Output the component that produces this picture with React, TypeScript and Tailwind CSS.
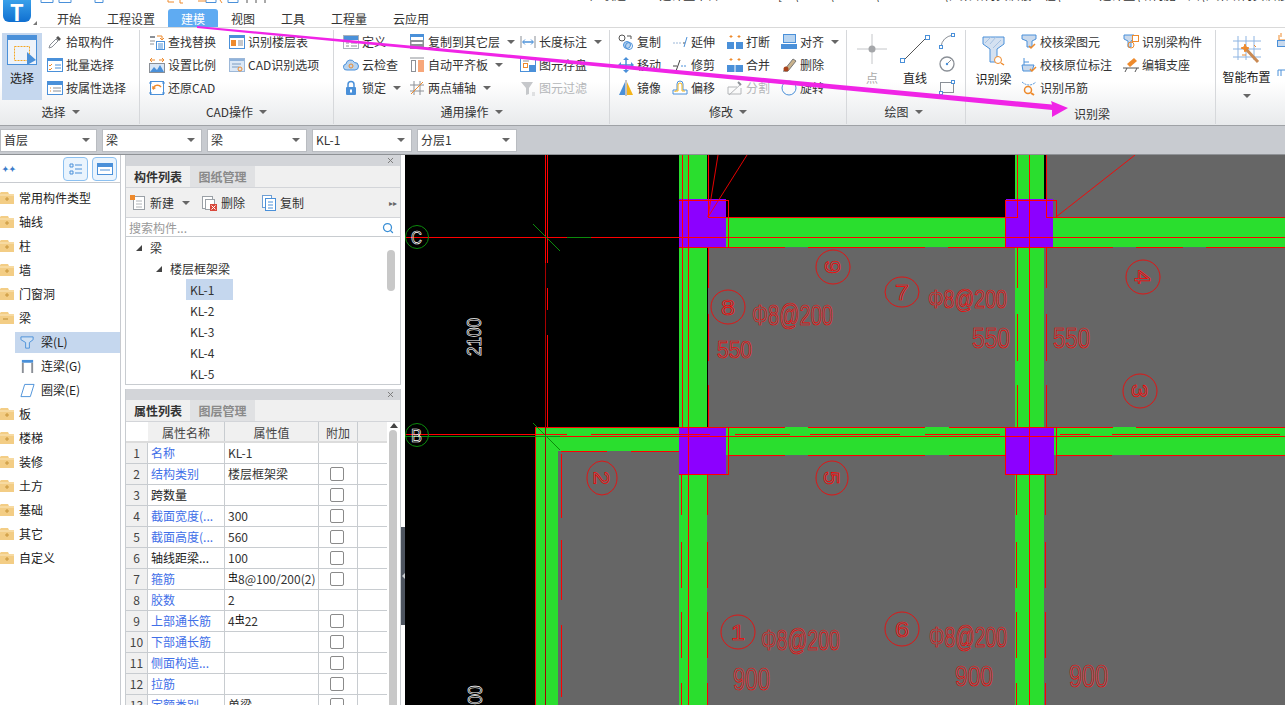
import React from "react";
import { Search, X } from "lucide-react";

const B = "#4a90d9";
const O = "#ee8a2c";
const G = "#8a8f96";

// 16x16 ribbon icon wrapper
function Ic({ children, s = 16 }: { children: React.ReactNode; s?: number }) {
  return (
    <svg width={s} height={s} viewBox="0 0 16 16" fill="none" className="shrink-0">
      {children}
    </svg>
  );
}

const icons: Record<string, React.ReactNode> = {
  pick: (<><path d="M2 14l1-3 6-6 2 2-6 6z" fill="#fff" stroke={G} /><path d="M9 4l2-2 3 3-2 2z" fill="#555" /></>),
  batch: (<><rect x="0.5" y="1.5" width="15" height="13" fill="#fff" stroke={B} /><rect x="1" y="2" width="14" height="2" fill={B} /><path d="M2 8l1 1 2-2M2 12l1 1 2-2" stroke={O} /><path d="M8 8h6M8 11h6" stroke={B} /></>),
  attr: (<><rect x="0.5" y="1.5" width="15" height="13" fill="#fff" stroke={B} /><rect x="1" y="2" width="14" height="3" fill={B} /><path d="M3 8h1M3 11h1" stroke={O} /><path d="M6 8h8M6 11h8" stroke={G} /></>),
  find: (<><path d="M1 2h5v2H1z" fill={G} /><path d="M8 2h5v3" stroke={O} /><path d="M11 4l2 2 2-2" stroke={O} /><rect x="7.5" y="7.5" width="8" height="8" fill="#fff" stroke={B} /><path d="M9 10h5M9 12h5M9 14h5" stroke={B} /><path d="M1 7h5M1 10h4" stroke={G} /></>),
  scale: (<><path d="M1 3h5M10 3h5" stroke={O} /><path d="M3 1l-2 2 2 2M13 1l2 2-2 2" stroke={O} /><rect x="0.5" y="6.5" width="15" height="9" fill="#d8e6f6" stroke={G} /><path d="M1 15l4-5 3 3 3-5 4 7z" fill={B} /></>),
  restore: (<><rect x="1.5" y="1.5" width="13" height="13" fill="#fff" stroke={B} /><path d="M0 3h3M13 3h3M0 13h3M13 13h3" stroke={B} /><path d="M4 9a4.500 4.500 0 0 1 8-2" stroke={O} strokeWidth="1.500" /><path d="M3 6l1 4 3-2z" fill={O} /></>),
  floor: (<><rect x="0.5" y="1.500" width="15" height="13" fill="#fff" stroke={B} /><rect x="1" y="2" width="14" height="2" fill={B} /><rect x="2" y="6" width="5" height="6" fill={O} /><path d="M9 7h5M9 9h5M9 11h5" stroke={G} /></>),
  cadopt: (<><rect x="0.5" y="1.500" width="15" height="13" fill="#dce8f6" stroke="#9db8d8" /><rect x="1" y="2" width="14" height="2" fill="#8fb3dc" /><path d="M3 7h9M3 10h7" stroke="#7d9cc0" /><circle cx="11" cy="12" r="2" stroke={O} /></>),
  define: (<><rect x="0.5" y="1.500" width="15" height="13" fill="#fff" stroke="#aab2bc" /><rect x="1" y="2" width="14" height="4" fill={B} /><path d="M3 9h3M8 9h6M3 12h3M8 12h6" stroke={G} /></>),
  cloud: (<><path d="M4 13a3 3 0 0 1-1-6 4.500 4.500 0 0 1 8.500-1.500A3.700 3.700 0 0 1 12 13z" fill="#b8d4f0" stroke={B} /><circle cx="8" cy="9" r="2" stroke={O} /></>),
  lock: (<><path d="M5 7V4.500a3 3 0 0 1 6 0V7" stroke={B} strokeWidth="1.500" /><rect x="3" y="7" width="10" height="8" rx="1" fill={B} /><rect x="7" y="9.500" width="2" height="3" fill="#fff" /></>),
  copyfloor: (<><rect x="1.500" y="0.500" width="13" height="7" fill="#fff" stroke={B} /><rect x="2" y="1" width="12" height="2" fill={B} /><rect x="1" y="6" width="14" height="9" fill="#8c9096" /><rect x="2.500" y="8" width="11" height="2" fill="#fff" /></>),
  align: (<><path d="M1 1h14" stroke="#8c9096" /><rect x="2.500" y="3.500" width="4" height="11" fill="#fff" stroke="#8c9096" /><rect x="9" y="3" width="6" height="12" fill="#f7a77a" /></>),
  twoaxis: (<><path d="M1 5h14M1 11h14M5 1v14M11 1v14" stroke="#8c9096" /><path d="M2 14L14 2" stroke={O} /></>),
  measure: (<><path d="M1 2v12M15 2v12" stroke={G} /><path d="M3 8h10" stroke={B} strokeWidth="1.500" /><path d="M5 5.500L2.500 8 5 10.500M11 5.500L13.500 8 11 10.500" stroke={B} /></>),
  save: (<><rect x="0.500" y="1.500" width="15" height="13" fill="#fff" stroke={B} /><path d="M3 4h6" stroke={G} /><rect x="3.500" y="6.500" width="4" height="4" stroke={O} /><rect x="9" y="8" width="6" height="6" fill={B} /></>),
  filter: (<><path d="M1 2h12L9 8v6l-3 1V8z" fill="#c6c8cb" /><path d="M12 13h3M12 15h3" stroke="#c6c8cb" /></>),
  copy: (<><circle cx="4" cy="4" r="3" stroke="#555" /><circle cx="9" cy="11" r="3.500" fill="#b8d4f0" stroke={B} /><circle cx="11" cy="12" r="3.500" stroke={B} /><path d="M9 2h4v3" stroke="#555" /></>),
  move: (<><path d="M8 1v14M1 8h14" stroke={B} strokeWidth="1.500" /><path d="M8 0l3 3H5zM8 16l3-3H5zM0 8l3-3v6zM16 8l-3-3v6z" fill={B} /></>),
  mirror: (<><path d="M7 2L1 15h6z" fill={B} /><path d="M9 2l6 13H9z" fill="#f4b41a" /><path d="M8 0v16" stroke="#888" /></>),
  extend: (<><path d="M1 9h8" stroke="#9db8d8" strokeDasharray="2 1" /><path d="M11 9h2" stroke="#555" /><path d="M15 3l-3 10" stroke={B} /></>),
  trim: (<><path d="M1 9h4" stroke="#444" /><path d="M9 9h6" stroke={B} strokeDasharray="2 1" /><path d="M8 3L4 14" stroke="#444" /></>),
  offset: (<><path d="M1 14v-4h4V4a3 3 0 0 1 6 0v6h4v4z" fill="#fff" stroke={B} /><path d="M3 12v-1h3V5a2 2 0 0 1 4 0v6h3" stroke="#f4b41a" /></>),
  breakk: (<><path d="M4 1v3M2.500 2.500h3M12 1v3M10.500 2.500h3" stroke={O} /><rect x="0" y="8" width="7" height="7" fill={B} /><rect x="9" y="8" width="7" height="7" fill={B} /></>),
  merge: (<><path d="M4 1v3M2.500 2.500h3M12 1v3M10.500 2.500h3" stroke={O} /><rect x="0" y="8" width="16" height="7" fill={B} /><path d="M8 8v7" stroke="#fff" /></>),
  split: (<><path d="M1 14V7h9M1 14h13V8M2 15l12-11" stroke="#b4b6b9" /><path d="M11 2l3 3" stroke="#8c9096" strokeWidth="2" /></>),
  alignr: (<><rect x="2.500" y="0.500" width="12" height="8" fill="#b8d4f0" stroke={B} /><rect x="0" y="10" width="16" height="5" fill={B} /></>),
  del: (<><path d="M2 14h5" stroke="#555" /><path d="M4 12l8-10 3 2-8 10z" fill="#c9b28c" stroke="#777" /><circle cx="5" cy="12" r="2.500" fill="#a8431a" /></>),
  rotate: (<><circle cx="8" cy="8" r="7" stroke={B} /></>),
  checkbeam: (<><path d="M1 1h14v4l-4 2v6H6V7L1 5z" fill="#c9d9ec" stroke={B} /><path d="M8 12l2 2 4-4" stroke={O} strokeWidth="1.500" /></>),
  checkmark: (<><path d="M3 1v7M3 5h5" stroke={B} /><path d="M1 8h12l-2 6H2z" fill="#c9d9ec" stroke={B} /><path d="M9 12l2 2 4-4" stroke={O} strokeWidth="1.500" /></>),
  hanger: (<><path d="M1 2q7 6 14 0" stroke={B} strokeDasharray="2 1" /><circle cx="7" cy="10" r="3.500" stroke={O} strokeWidth="1.500" /><path d="M10 13l3 2" stroke={O} strokeWidth="2" /></>),
  beamcomp: (<><path d="M1 1h10v4L8 7v6H5V7L1 5z" fill="#c9d9ec" stroke={B} /><rect x="9.500" y="1.500" width="6" height="6" fill="#fff" stroke={O} /><circle cx="8" cy="11" r="3" stroke={O} /></>),
  support: (<><path d="M4 7l7-6 3 3-7 6z" fill={O} /><path d="M0 11h16M2 15l2-4M12 15l2-4" stroke="#555" /></>),
  fnew: (<><rect x="3.500" y="1.500" width="11" height="13" fill="#fff" stroke="#9aa0a6" /><path d="M6 6h6M6 9h6M6 12h6" stroke="#b0b4b8" /><rect x="0" y="0" width="5" height="5" fill={O} /></>),
  fdel: (<><rect x="1.500" y="1.500" width="10" height="12" fill="#fff" stroke="#9aa0a6" /><rect x="4.500" y="4.500" width="9" height="10" fill="#fff" stroke="#9aa0a6" /><rect x="9" y="9" width="7" height="7" fill="#d9483b" /><path d="M10.500 10.500l4 4M14.500 10.500l-4 4" stroke="#fff" /></>),
  fcopy: (<><rect x="1.500" y="0.500" width="9" height="12" fill="#fff" stroke="#6f9fd4" /><rect x="4.500" y="3.500" width="10" height="12" fill="#fff" stroke={B} /><path d="M7 7h5M7 10h5M7 13h5" stroke={B} /></>),
};

function Tri({ c = "#666" }: { c?: string }) {
  return <span className="inline-block w-0 h-0 border-x-[4px] border-x-transparent border-t-[4px]" style={{ borderTopColor: c }} />;
}

function Item({ icon, label, arrow, off }: { icon: string; label: string; arrow?: boolean; off?: boolean }) {
  return (
    <div className={`h-[23px] flex items-center gap-[3px] whitespace-nowrap ${off ? "text-[#b4b6b9]" : "text-[#333]"}`}>
      <Ic>{icons[icon]}</Ic>
      <span>{label}</span>
      {arrow && <span className="ml-[4px] flex"><Tri /></span>}
    </div>
  );
}

function Group({ w, label, children, off = 0 }: { w: string; label?: string; children: React.ReactNode; off?: number }) {
  return (
    <div className={`${w} shrink-0 flex flex-col border-r border-[#d6d8db] h-[94px] mt-[2px]`}>
      <div className="flex h-[70px]">{children}</div>
      {label && (
        <div className="h-[24px] flex items-center justify-center gap-[6px] text-[#333]" style={{ paddingRight: off }}>
          {label}
          <Tri />
        </div>
      )}
    </div>
  );
}

function Combo({ w, t }: { w: string; t: string }) {
  return (
    <div className={`${w} h-[23px] bg-white border border-[#b9bcc1] flex items-center justify-between px-[3px] pr-[6px] text-[#333]`}>
      <span>{t}</span>
      <Tri />
    </div>
  );
}

function Folder({ open }: { open?: boolean }) {
  return (
    <svg width="14" height="14" viewBox="0 0 14 14" className="shrink-0">
      <path d="M1 1h7l1 2h5v10H0V2z" fill="#f3cd85" />
      <path d="M0 4h14" stroke="#fbe7bd" />
      {open ? <path d="M3 8h5" stroke="#b98a32" /> : <path d="M5 8h4M7 6v4" stroke="#c9963a" />}
    </svg>
  );
}

function Side({ t, open }: { t: string; open?: boolean }) {
  return (
    <div className="h-[24px] flex items-center gap-[5px] text-[#222]">
      <Folder open={open} />
      {t}
    </div>
  );
}

function SubSide({ t, sel, children }: { t: string; sel?: boolean; children: React.ReactNode }) {
  return (
    <div className="h-[24px] flex items-center">
      <div className={`ml-[15px] w-[105px] h-[21px] pl-[5px] flex items-center gap-[6px] text-[#222] ${sel ? "bg-[#c5d7ee]" : ""}`}>
        <Ic s={15}>{children}</Ic>
        {t}
      </div>
    </div>
  );
}

function PanelHead({ a, b }: { a: string; b: string }) {
  return (
    <>
      <div className="h-[11px] bg-[#d3d5d9] flex items-center justify-end pr-[5px]">
        <X size={9} color="#777" strokeWidth={2.5} />
      </div>
      <div className="h-[22px] flex bg-[#f0f0f0] border-b border-[#d3d5d9] font-bold">
        <div className="w-[64px] flex items-center justify-center text-[#333]">{a}</div>
        <div className="w-[65px] flex items-center justify-center bg-[#e0e1e3] text-[#8a8a8a]">{b}</div>
      </div>
    </>
  );
}

function TreeKL({ t, sel }: { t: string; sel?: boolean }) {
  return (
    <div className="h-[21px] pl-[60px] flex items-center text-[#333]">
      <div className={`w-[47px] h-[21px] pl-[4px] flex items-center ${sel ? "bg-[#c5d7ee]" : ""}`}>{t}</div>
    </div>
  );
}

function TreeDot() {
  return <span className="w-0 h-0 border-l-[6px] border-l-transparent border-b-[6px] border-b-[#444]" />;
}

const Bar = () => <span className="text-[10px] text-black inline-block -translate-y-[3px]">虫</span>;

const rows: { n: string; v?: React.ReactNode; blue?: boolean; nocheck?: boolean }[] = [
  { n: "名称", v: "KL-1", blue: true, nocheck: true },
  { n: "结构类别", v: "楼层框架梁", blue: true },
  { n: "跨数量" },
  { n: "截面宽度(...", v: "300", blue: true },
  { n: "截面高度(...", v: "560", blue: true },
  { n: "轴线距梁...", v: "100" },
  { n: "箍筋", v: <><Bar />8@100/200(2)</>, blue: true },
  { n: "胶数", v: "2", blue: true, nocheck: true },
  { n: "上部通长筋", v: <>4<Bar />22</>, blue: true },
  { n: "下部通长筋", blue: true },
  { n: "侧面构造...", blue: true },
  { n: "拉筋", blue: true },
  { n: "定额类别", v: "单梁", blue: true },
];

// CAD drawing helpers: coordinates below are page pixels (see viewBox)
function Cad({ x, y, w, h, t, c = "#f00", r }: { x: number; y: number; w: number; h: number; t: string; c?: string; r?: number }) {
  return (
    <text
      x={x}
      y={y}
      textLength={w}
      lengthAdjust="spacingAndGlyphs"
      fontFamily="Liberation Sans, sans-serif"
      fontSize={h / 0.7}
      fill="none"
      stroke={c}
      strokeWidth="0.7"
      transform={r ? `rotate(${r} ${x + w / 2} ${y - h / 2})` : undefined}
    >
      {t}
    </text>
  );
}

function Mark({ cx, cy, rx, ry, t, r }: { cx: number; cy: number; rx: number; ry: number; t: string; r?: number }) {
  return (
    <g>
      <ellipse cx={cx} cy={cy} rx={rx} ry={ry} fill="none" stroke="#f00" strokeWidth="0.8" />
      <Cad x={cx - 7} y={cy + 8} w={14} h={16} t={t} r={r} />
    </g>
  );
}

function CadDrawing() {
  return (
    <svg width="880" height="550" viewBox="405 155 880 550" className="block">
      <rect x="708" y="247" width="577" height="180" fill="#666" />
      <rect x="1046" y="155" width="239" height="62" fill="#666" />
      <rect x="558" y="451" width="727" height="254" fill="#666" />
      <g fill="#2ade2e" shapeRendering="crispEdges">
        <rect x="679" y="155" width="28" height="550" />
        <rect x="1015" y="155" width="29" height="550" />
        <rect x="726" y="217" width="559" height="30" />
        <rect x="535" y="427" width="750" height="24" />
        <rect x="726" y="427" width="559" height="28" />
        <rect x="535" y="427" width="23" height="278" />
      </g>
      <g fill="#8c00ff" shapeRendering="crispEdges">
        <rect x="679" y="199" width="47" height="48" />
        <rect x="1006" y="199" width="47" height="48" />
        <rect x="679" y="427" width="47" height="47" />
        <rect x="1006" y="427" width="48" height="47" />
      </g>
      <g stroke="#f00" fill="none" shapeRendering="crispEdges">
        <path d="M405 237.500H567M591 237.500H1285" />
        <path d="M545.500 155V263M547.500 155V263M547.500 288V310M547.500 335V427" />
        <path d="M708.500 155V217.500H1017.500V155M1046.500 155V217.500H1285" />
        <path d="M682.500 155V427M688.500 155V705M1029.500 155V705" />
        <path d="M679 247.500H785M808 247.500H925M948 247.500H1113M1136 247.500H1183M1206 247.500H1285" />
        <path d="M708.500 248V288M708.500 314V361M708.500 385V427M1017.500 248V288M1017.500 314V361M1017.500 385V427M1046.500 248V288M1046.500 314V361M1046.500 385V427" />
        <path d="M679 200.500H728.500V247M1005.500 247V200.500H1056.500V217" />
        <path d="M728.500 427V474.500H679M1005.500 427V474.500H1056.500V427" />
        <path d="M534.500 427.500H785M808 427.500H925M949 427.500H1113M1136 427.500H1285" />
        <path d="M560 434.500H567M591 434.500H710M735 434.500H790M810 434.500H900M925 434.500H1000M1060 434.500H1090M1112 434.500H1280" />
        <path d="M405 434.500H560" />
        <path d="M560 436.500H1285" />
        <path d="M728 455.500H785M808 455.500H925M949 455.500H1005M1056 455.500H1112M1140 455.500H1285" />
        <path d="M561 451.500H607M631 451.500H679" />
        <path d="M535.500 427V705" />
        <path d="M561.500 454V518M561.500 540V600M561.500 625V697" />
        <path d="M681.500 475V515M681.500 542V588M681.500 612V658M681.500 683V705M707.500 475V515M707.500 542V588M707.500 612V658M707.500 683V705" />
        <path d="M1016.500 475V515M1016.500 542V588M1016.500 612V658M1016.500 683V705M1045.500 475V515M1045.500 542V588M1045.500 612V658M1045.500 683V705" />
      </g>
      <path d="M545.500 263V427M545.500 427V705" stroke="#a80000" shapeRendering="crispEdges" />
      <path d="M708 217L718 155M708 217L747 155M1056 217L1135 155" stroke="#f00" strokeWidth="0.9" />
      <path d="M567 237.500H591M405 436.500H560" stroke="#0c8a0c" shapeRendering="crispEdges" />
      <path d="M533 224L560 251M533 423L560 450" stroke="#0c8a0c" />
      <circle cx="417" cy="237" r="11.500" fill="none" stroke="#0c8a0c" />
      <circle cx="417" cy="435" r="11.500" fill="none" stroke="#0c8a0c" />
      <Cad x={411} y={244} w={11} h={13} t="C" c="#fff" />
      <Cad x={411} y={442} w={11} h={13} t="B" c="#fff" />
      <Cad x={455} y={344} w={38} h={14} t="2100" c="#fff" r={-90} />
      <Cad x={465} y={702} w={19} h={14} t="00" c="#fff" r={-90} />

      <Mark cx={728} cy={307} rx={17} ry={17} t="8" />
      <Mark cx={833} cy={267} rx={17} ry={17} t="9" r={90} />
      <Mark cx={902} cy={292} rx={17} ry={15} t="7" />
      <Mark cx={1143} cy={277} rx={17} ry={17} t="4" r={90} />
      <Mark cx={1140} cy={391} rx={17} ry={17} t="3" r={90} />
      <Mark cx={602} cy={478} rx={15} ry={17} t="2" r={90} />
      <Mark cx={832} cy={478} rx={16} ry={17} t="5" r={90} />
      <Mark cx={738} cy={632} rx={17} ry={17} t="1" />
      <Mark cx={902} cy={629} rx={17} ry={17} t="6" />

      <Cad x={752} y={325} w={81} h={20} t="Φ8@200" />
      <Cad x={928} y={308} w={79} h={18} t="Φ8@200" />
      <Cad x={761} y={650} w={79} h={21} t="Φ8@200" />
      <Cad x={929} y={647} w={78} h={20} t="Φ8@200" />
      <Cad x={717} y={358} w={35} h={17} t="550" />
      <Cad x={972} y={348} w={38} h={20} t="550" />
      <Cad x={1053} y={348} w={37} h={20} t="550" />
      <Cad x={733} y={690} w={37} h={22} t="900" />
      <Cad x={955} y={686} w={38} h={21} t="900" />
      <Cad x={1069} y={687} w={39} h={22} t="900" />
    </svg>
  );
}

export default function App() {
  return (
    <div className="relative w-[1285px] h-[705px] overflow-hidden bg-white text-[12px] font-['Noto_Sans_CJK_SC','Liberation_Sans',sans-serif]">
      {/* Title bar + tabs */}
      <header className="flex h-[28px] bg-white">
        <div className="w-[40px] shrink-0 relative">
          <div className="ml-[3px] w-[28px] h-[22px] rounded-b-[6px] bg-linear-to-b from-[#38a0ea] to-[#0f6fd0] flex items-center justify-center text-white text-[22px] font-bold leading-none">
            T
          </div>
          <span className="absolute left-[33px] top-[21px] w-0 h-0 border-l-[4px] border-l-transparent border-b-[4px] border-b-[#777]" />
        </div>
        <div className="flex-1 flex flex-col border-b border-[#d9d9d9] min-w-0">
          <div className="h-[9px] flex overflow-hidden">
            <svg width="240" height="9" className="shrink-0">
              <g fill="none" stroke={B}>
                <path d="M1 0v2.500h12V0M19 0v2.500h12V0M55 0v2.500h8V0" />
                <path d="M166 0v2.500h10V0M188 0v2.500h10V0" />
                <path d="M207 0v3M216 0v3M225 0v3" stroke="#555" />
              </g>
              <path d="M128 0v2h6M140 0v3h3M180 0l2 3M158 1h8M240 0" stroke={O} fill="none" />
            </svg>
            <div className="ml-[310px] -mt-[12px] text-[12px] leading-[14px] whitespace-nowrap text-[#333]">
              广联达BIM土建计量平台 GTJ2018 - [D:\Users\Lenovo\Documents\框架结构实训楼工程\2018土建计量\结构施工图\框架结构实训楼工程\广联达算量工程.GTJ]
            </div>
          </div>
          <nav className="h-[18px] flex items-center text-[#333]">
            <span className="ml-[17px] w-[50px] pt-[1px]">开始</span>
            <span className="w-[61px] pt-[1px]">工程设置</span>
            <span className="w-[50px] h-[18px] pt-[1px] rounded-t-[3px] bg-[#5fabf2] text-white flex items-center justify-center">建模</span>
            <span className="ml-[13px] w-[50px] pt-[1px]">视图</span>
            <span className="w-[50px] pt-[1px]">工具</span>
            <span className="w-[62px] pt-[1px]">工程量</span>
            <span className="pt-[1px]">云应用</span>
          </nav>
        </div>
      </header>

      {/* Ribbon */}
      <section className="h-[98px] flex bg-linear-to-b from-white via-white via-55% to-[#e8eaec] border-b border-[#9fa2a6]">
        <Group w="w-[140px]" label="选择" off={18}>
          <div className="ml-[2px] w-[40px] h-[67px] mt-[3px] bg-[#c5d7ee] flex flex-col items-center text-[#222]">
            <svg width="30" height="30" viewBox="0 0 30 30" className="mt-[2px]">
              <rect x="0.500" y="0.500" width="29" height="29" fill="#eef3fa" stroke={B} />
              <rect x="0" y="0" width="30" height="5" fill={B} />
              <rect x="7.500" y="11.500" width="15" height="14" fill="none" stroke="#f5a623" strokeDasharray="2 1" />
              <path d="M20 17l9 8-9 5z" fill={B} />
            </svg>
            <span className="mt-[4px]">选择</span>
          </div>
          <div className="ml-[5px]">
            <Item icon="pick" label="拾取构件" />
            <Item icon="batch" label="批量选择" />
            <Item icon="attr" label="按属性选择" />
          </div>
        </Group>
        <Group w="w-[194px]" label="CAD操作">
          <div className="ml-[9px] w-[80px]">
            <Item icon="find" label="查找替换" />
            <Item icon="scale" label="设置比例" />
            <Item icon="restore" label="还原CAD" />
          </div>
          <div>
            <Item icon="floor" label="识别楼层表" />
            <Item icon="cadopt" label="CAD识别选项" />
          </div>
        </Group>
        <Group w="w-[276px]" label="通用操作">
          <div className="ml-[9px] w-[66px]">
            <Item icon="define" label="定义" />
            <Item icon="cloud" label="云检查" />
            <Item icon="lock" label="锁定" arrow />
          </div>
          <div className="w-[111px]">
            <Item icon="copyfloor" label="复制到其它层" arrow />
            <Item icon="align" label="自动平齐板" arrow />
            <Item icon="twoaxis" label="两点辅轴" arrow />
          </div>
          <div>
            <Item icon="measure" label="长度标注" arrow />
            <Item icon="save" label="图元存盘" />
            <Item icon="filter" label="图元过滤" off />
          </div>
        </Group>
        <Group w="w-[237px]" label="修改">
          <div className="ml-[8px] w-[54px]">
            <Item icon="copy" label="复制" />
            <Item icon="move" label="移动" />
            <Item icon="mirror" label="镜像" />
          </div>
          <div className="w-[55px]">
            <Item icon="extend" label="延伸" />
            <Item icon="trim" label="修剪" />
            <Item icon="offset" label="偏移" />
          </div>
          <div className="w-[54px]">
            <Item icon="breakk" label="打断" />
            <Item icon="merge" label="合并" />
            <Item icon="split" label="分割" off />
          </div>
          <div>
            <Item icon="alignr" label="对齐" arrow />
            <Item icon="del" label="删除" />
            <Item icon="rotate" label="旋转" />
          </div>
        </Group>
        <Group w="w-[119px]" label="绘图" off={5}>
          <div className="w-[50px] flex flex-col items-center text-[#aaa]">
            <svg width="30" height="30" viewBox="0 0 30 30" className="mt-[4px]">
              <path d="M15 0v30M0 15h30" stroke="#c4c6c9" />
              <circle cx="15" cy="15" r="3.500" fill="#a4a6a9" />
            </svg>
            <span className="mt-[5px]">点</span>
          </div>
          <div className="w-[36px] flex flex-col items-center text-[#222]">
            <svg width="30" height="30" viewBox="0 0 30 30" className="mt-[4px]">
              <path d="M3 27L27 3" stroke="#555" />
              <rect x="0.500" y="24.500" width="4" height="4" fill="#fff" stroke={B} />
              <rect x="25.500" y="1.500" width="4" height="4" fill="#fff" stroke={B} />
            </svg>
            <span className="mt-[5px]">直线</span>
          </div>
          <div className="ml-[6px] flex flex-col gap-[7px] pt-[3px]">
            <Ic><path d="M2 14Q3 4 14 2" stroke={G} /><rect x="0.500" y="12.500" width="3" height="3" fill="#fff" stroke={B} /><rect x="12.500" y="0.500" width="3" height="3" fill="#fff" stroke={B} /></Ic>
            <Ic><circle cx="8" cy="8" r="7" stroke={G} strokeWidth="1.300" /><path d="M8 8l4-4" stroke={G} /><circle cx="8" cy="8" r="1.200" fill={B} /></Ic>
            <Ic><rect x="1.500" y="3.500" width="13" height="10" stroke={G} /><rect x="0.500" y="12.500" width="3" height="3" fill="#fff" stroke={B} /><rect x="12.500" y="1.500" width="3" height="3" fill="#fff" stroke={B} /></Ic>
          </div>
        </Group>
        <Group w="w-[250px]">
          <div className="w-[55px] flex flex-col items-center text-[#222]">
            <svg width="24" height="30" viewBox="0 0 24 30" className="mt-[6px]">
              <path d="M1 1h21v7l-7 5v13H8V13L1 8z" fill="#d4e1f1" stroke={B} />
              <path d="M3 7l6-6M8 8l6-7M11 12l8-8" stroke="#a6c2e2" />
              <circle cx="16" cy="24" r="3.500" fill="#fff" stroke={O} />
              <path d="M19 27l3 2" stroke={O} strokeWidth="1.500" />
            </svg>
            <span className="mt-[4px]">识别梁</span>
          </div>
          <div className="w-[102px]">
            <Item icon="checkbeam" label="校核梁图元" />
            <Item icon="checkmark" label="校核原位标注" />
            <Item icon="hanger" label="识别吊筋" />
          </div>
          <div>
            <Item icon="beamcomp" label="识别梁构件" />
            <Item icon="support" label="编辑支座" />
          </div>
        </Group>
        <div className="flex-1 flex mt-[3px] min-w-0 overflow-hidden">
          <div className="w-[61px] shrink-0 flex flex-col items-center text-[#222]">
            <svg width="30" height="30" viewBox="0 0 30 30" className="mt-[4px]">
              <path d="M6 1v24M14 1v24M22 1v24M1 6h28M1 14h28M1 22h28" stroke="#8db4e2" />
              <path d="M13 13l13 14" stroke="#c98a54" strokeWidth="3" />
              <path d="M13 9l1 3 3 1-3 1-1 3-1-3-3-1 3-1zM22 10l2 2M10 20h4" fill={O} stroke={O} />
            </svg>
            <span className="mt-[3px]">智能布置</span>
            <span className="mt-[8px] flex"><Tri /></span>
          </div>
          <div className="flex flex-col gap-[14px] pt-[1px]">
            <Ic><path d="M2 3v5h6M4 1v4" stroke={O} /><rect x="0.500" y="8.500" width="15" height="6" fill="#c9d9ec" stroke={B} /></Ic>
            <Ic><path d="M1 14V8h3v6M4 8h6v6M10 8h5v6" stroke={B} /></Ic>
          </div>
        </div>
      </section>

      {/* Floor / type selectors */}
      <section className="h-[29px] flex items-center gap-[5px] bg-[#c8cbd0] border-b border-[#8f9296]">
        <Combo w="w-[97px]" t="首层" />
        <Combo w="w-[100px]" t="梁" />
        <Combo w="w-[100px]" t="梁" />
        <Combo w="w-[100px]" t="KL-1" />
        <Combo w="w-[100px]" t="分层1" />
      </section>

      <main className="h-[550px] flex">
        {/* Module tree */}
        <aside className="w-[121px] shrink-0 border-r border-[#c8cbd0] bg-white">
          <div className="h-[28px] flex items-center border-b border-[#c8cbd0] relative">
            <span className="ml-[2px] text-[#3b7cc9] text-[8px] font-bold leading-none w-[61px]">✦✦</span>
            <div className="w-[25px] h-[24px] rounded-[4px] border border-[#8cc0f0] bg-[#eaf4fd] flex items-center justify-center">
              <Ic><path d="M2 3h3v3H2zM2 10h3v3H2z" stroke={B} /><path d="M7 4h7M7 8h7M7 12h7" stroke={B} /></Ic>
            </div>
            <div className="ml-[4px] w-[25px] h-[24px] rounded-[4px] border border-[#8cc0f0] bg-[#eaf4fd] flex items-center justify-center">
              <Ic><rect x="0.500" y="2.500" width="15" height="11" fill="#fff" stroke={B} /><rect x="1" y="3" width="14" height="3" fill={B} /><path d="M3 9h10" stroke={B} /></Ic>
            </div>
          </div>
          <div className="pt-[3px]">
            <Side t="常用构件类型" />
            <Side t="轴线" />
            <Side t="柱" />
            <Side t="墙" />
            <Side t="门窗洞" />
            <Side t="梁" open />
            <SubSide t="梁(L)" sel>
              <path d="M1 2h13v3l-4 3v6H6V8L1 5z" fill="#cfe0f3" stroke={B} />
            </SubSide>
            <SubSide t="连梁(G)">
              <rect x="2" y="1" width="12" height="3" fill={B} />
              <path d="M3 4v11M13 4v11" stroke="#8a8f96" strokeWidth="2" />
            </SubSide>
            <SubSide t="圈梁(E)">
              <path d="M5 1.500h10L11 14.500H1z" fill="#fff" stroke={B} />
            </SubSide>
            <Side t="板" />
            <Side t="楼梯" />
            <Side t="装修" />
            <Side t="土方" />
            <Side t="基础" />
            <Side t="其它" />
            <Side t="自定义" />
          </div>
        </aside>

        <div className="w-[4px] shrink-0" />

        {/* Component + property panels */}
        <div className="w-[276px] shrink-0 flex flex-col gap-[4px]">
          <div className="h-[230px] border-x border-b border-[#c8ccd0] flex flex-col">
            <PanelHead a="构件列表" b="图纸管理" />
            <div className="h-[30px] bg-[#f0f0f0] border-b border-[#d3d5d9] flex items-center text-[#333]">
              <span className="ml-[4px]"><Ic>{icons.fnew}</Ic></span>
              <span className="ml-[4px] w-[29px]">新建</span>
              <span className="flex mr-[11px] ml-[3px]"><Tri /></span>
              <Ic>{icons.fdel}</Ic>
              <span className="ml-[4px] w-[40px]">删除</span>
              <Ic>{icons.fcopy}</Ic>
              <span className="ml-[3px]">复制</span>
              <span className="ml-auto mr-[3px] text-[8px] text-[#666]">▸▸</span>
            </div>
            <div className="h-[19px] flex items-center justify-between px-[3px] pr-[6px] pt-[2px] border-b border-[#c8ccd0] text-[#999]">
              搜索构件...
              <Search size={12} color="#3a8fd6" strokeWidth={2.5} />
            </div>
            <div className="flex-1 flex overflow-hidden">
              <div className="flex-1 min-w-0">
                <div className="h-[21px] pl-[10px] flex items-center gap-[8px] text-[#333]"><TreeDot />梁</div>
                <div className="h-[21px] pl-[30px] flex items-center gap-[8px] text-[#333]"><TreeDot />楼层框架梁</div>
                <TreeKL t="KL-1" sel />
                <TreeKL t="KL-2" />
                <TreeKL t="KL-3" />
                <TreeKL t="KL-4" />
                <TreeKL t="KL-5" />
              </div>
              <div className="w-[13px] pt-[13px] pr-[5px] shrink-0">
                <div className="h-[41px] rounded-full bg-[#c8c8c8]" />
              </div>
            </div>
          </div>

          <div className="flex-1 min-h-0 border-x border-[#c8ccd0] flex flex-col overflow-hidden">
            <PanelHead a="属性列表" b="图层管理" />
            <div className="flex-1 min-h-0 flex overflow-hidden">
              <div className="w-[261px] shrink-0">
                <div className="h-[21px] flex bg-[#f0f0f0] border-b-2 border-[#dcdcdc] text-[#444] leading-[21px]">
                  <div className="w-[22px] bg-white" />
                  <div className="w-[77px] border-r border-[#c8ccd0] text-center">属性名称</div>
                  <div className="w-[94px] border-r border-[#c8ccd0] text-center">属性值</div>
                  <div className="w-[39px] border-r border-[#c8ccd0] text-center">附加</div>
                </div>
                {rows.map((r, i) => (
                  <div key={r.n} className="h-[21px] flex border-b border-[#c8ccd0] leading-[20px]">
                    <div className="w-[22px] shrink-0 bg-[#f0f0f0] border-r border-[#c8ccd0] text-center text-[#444]">{i + 1}</div>
                    <div className={`w-[77px] shrink-0 border-r border-[#c8ccd0] pl-[3px] whitespace-nowrap ${r.blue ? "text-[#3f6fe8]" : "text-[#222]"}`}>{r.n}</div>
                    <div className="w-[94px] shrink-0 border-r border-[#c8ccd0] pl-[3px] whitespace-nowrap overflow-hidden text-[#333]">{r.v}</div>
                    <div className="w-[39px] shrink-0 border-r border-[#c8ccd0] pr-[2px] flex items-center justify-center">
                      {!r.nocheck && <div className="w-[14px] h-[14px] rounded-[2px] border border-[#8a8a8a] bg-white" />}
                    </div>
                  </div>
                ))}
              </div>
              <div className="flex-1 flex flex-col items-start pl-[2px]">
                <span className="mt-[1px] ml-[1px] w-0 h-0 border-x-[4px] border-x-transparent border-b-[5px] border-b-[#444]" />
                <div className="mt-[2px] w-[8px] flex-1 rounded-t-full bg-[#c8c8c8]" />
              </div>
            </div>
          </div>
        </div>

        {/* Splitter */}
        <div className="w-[4px] shrink-0 flex flex-col">
          <div className="h-[372px]" />
          <div className="h-[98px] bg-[#4e5560] flex items-center justify-center">
            <span className="w-0 h-0 border-y-[3px] border-y-transparent border-r-[3px] border-r-[#c8ccd0]" />
          </div>
        </div>

        {/* Drawing canvas */}
        <div className="flex-1 bg-black overflow-hidden">
          <CadDrawing />
        </div>
      </main>

      {/* Annotation arrow drawn over the screenshot */}
      <svg width="1285" height="125" className="absolute left-0 top-0 pointer-events-none">
        <path d="M197 26L1052 104.500L1051 101L1068 108L1052 117L1052 110L197 28Z" fill="#f024e6" />
      </svg>
      <div className="absolute left-[1074px] top-[106px] text-[12px] leading-[16px] text-[#333]">识别梁</div>
    </div>
  );
}
